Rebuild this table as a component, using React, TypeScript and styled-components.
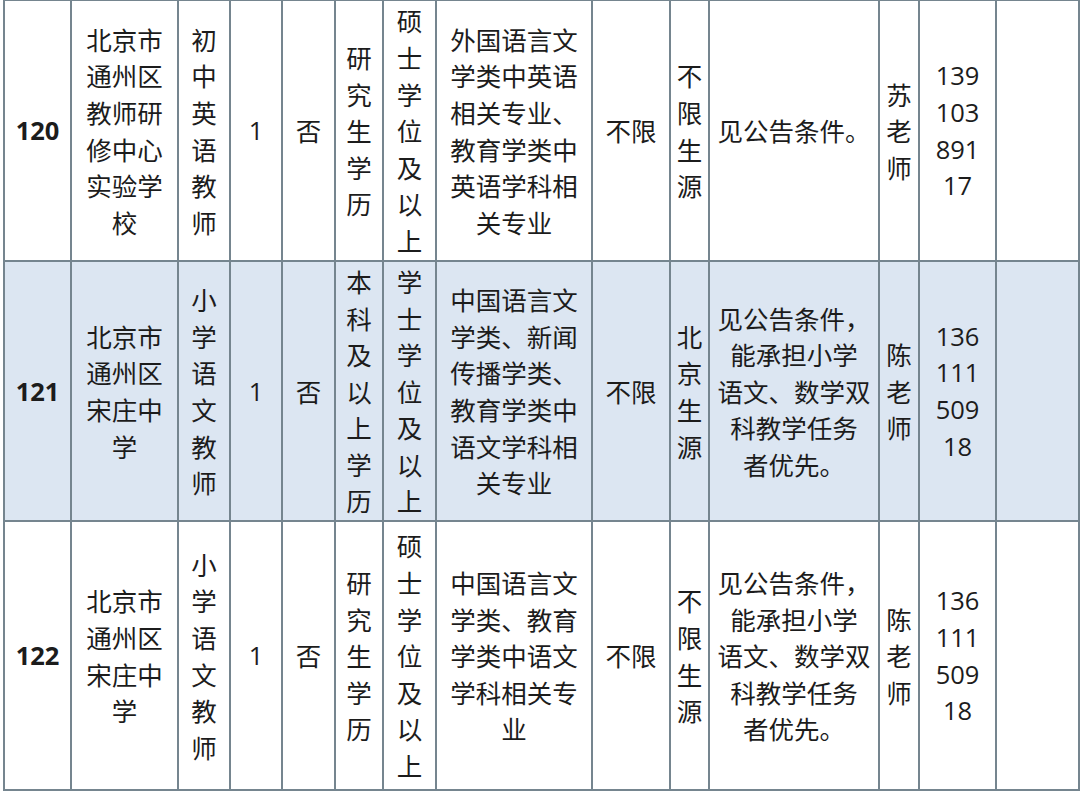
import React from 'react'
import styled, { createGlobalStyle } from 'styled-components'

const GlobalStyle = createGlobalStyle`
  html, body {
    margin: 0;
    padding: 0;
    background: #ffffff;
  }
  body {
    font-family: "Noto Sans CJK SC", "Noto Sans", sans-serif;
    color: #1c1c1c;
  }
`

const Page = styled.div`
  width: 1080px;
  height: 812px;
  padding: 0 0 0 3px;
  box-sizing: border-box;
  overflow: hidden;
  background: #ffffff;
`

const Table = styled.table`
  border-collapse: collapse;
  table-layout: fixed;
  width: 1075px;
  margin-top: -1px;
`

const Row = styled.tr<{ $shaded?: boolean; $height: number }>`
  height: ${({ $height }) => $height}px;
  background: ${({ $shaded }) => ($shaded ? '#dce6f2' : '#ffffff')};
`

const Cell = styled.td<{ $bold?: boolean; $digits?: boolean }>`
  border: 2px solid #75858f;
  padding: 0;
  text-align: center;
  vertical-align: middle;
  font-size: 25.5px;
  line-height: 36.6px;
  font-weight: ${({ $bold }) => ($bold ? 700 : 400)};
  font-family: ${({ $digits }) =>
    $digits ? '"Open Sans", "Noto Sans CJK SC", sans-serif' : '"Noto Sans CJK SC", "Noto Sans", sans-serif'};
  letter-spacing: 0;
  white-space: nowrap;
`

const Line = styled.span`
  display: block;
`

type Entry = {
  no: string
  unit: string[]
  post: string
  count: string
  flag: string
  edu: string
  degree: string
  major: string[]
  age: string
  source: string
  cond: string[]
  contact: string
  phone: string[]
  shaded: boolean
  height: number
}

const rows: Entry[] = [
  {
    no: '120',
    unit: ['北京市', '通州区', '教师研', '修中心', '实验学', '校'],
    post: '初中英语教师',
    count: '1',
    flag: '否',
    edu: '研究生学历',
    degree: '硕士学位及以上',
    major: ['外国语言文', '学类中英语', '相关专业、', '教育学类中', '英语学科相', '关专业'],
    age: '不限',
    source: '不限生源',
    cond: ['见公告条件。'],
    contact: '苏老师',
    phone: ['139', '103', '891', '17'],
    shaded: false,
    height: 261,
  },
  {
    no: '121',
    unit: ['北京市', '通州区', '宋庄中', '学'],
    post: '小学语文教师',
    count: '1',
    flag: '否',
    edu: '本科及以上学历',
    degree: '学士学位及以上',
    major: ['中国语言文', '学类、新闻', '传播学类、', '教育学类中', '语文学科相', '关专业'],
    age: '不限',
    source: '北京生源',
    cond: ['见公告条件，', '能承担小学', '语文、数学双', '科教学任务', '者优先。'],
    contact: '陈老师',
    phone: ['136', '111', '509', '18'],
    shaded: true,
    height: 260,
  },
  {
    no: '122',
    unit: ['北京市', '通州区', '宋庄中', '学'],
    post: '小学语文教师',
    count: '1',
    flag: '否',
    edu: '研究生学历',
    degree: '硕士学位及以上',
    major: ['中国语言文', '学类、教育', '学类中语文', '学科相关专', '业'],
    age: '不限',
    source: '不限生源',
    cond: ['见公告条件，', '能承担小学', '语文、数学双', '科教学任务', '者优先。'],
    contact: '陈老师',
    phone: ['136', '111', '509', '18'],
    shaded: false,
    height: 269,
  },
]

const widths = [67, 107, 52, 52, 53, 48, 53, 156, 78, 39, 170, 40, 77, 83]

const Lines = ({ items }: { items: string[] }) => (
  <>
    {items.map((t, i) => (
      <Line key={i}>{t}</Line>
    ))}
  </>
)

const Vertical = ({ text }: { text: string }) => <Lines items={Array.from(text)} />

export default function App() {
  return (
    <Page>
      <GlobalStyle />
      <Table>
        <colgroup>
          {widths.map((w, i) => (
            <col key={i} style={{ width: w }} />
          ))}
        </colgroup>
        <tbody>
          {rows.map((r) => (
            <Row key={r.no} $shaded={r.shaded} $height={r.height}>
              <Cell $bold $digits>{r.no}</Cell>
              <Cell><Lines items={r.unit} /></Cell>
              <Cell><Vertical text={r.post} /></Cell>
              <Cell $digits>{r.count}</Cell>
              <Cell>{r.flag}</Cell>
              <Cell><Vertical text={r.edu} /></Cell>
              <Cell><Vertical text={r.degree} /></Cell>
              <Cell><Lines items={r.major} /></Cell>
              <Cell>{r.age}</Cell>
              <Cell><Vertical text={r.source} /></Cell>
              <Cell><Lines items={r.cond} /></Cell>
              <Cell><Vertical text={r.contact} /></Cell>
              <Cell $digits><Lines items={r.phone} /></Cell>
              <Cell />
            </Row>
          ))}
        </tbody>
      </Table>
    </Page>
  )
}
